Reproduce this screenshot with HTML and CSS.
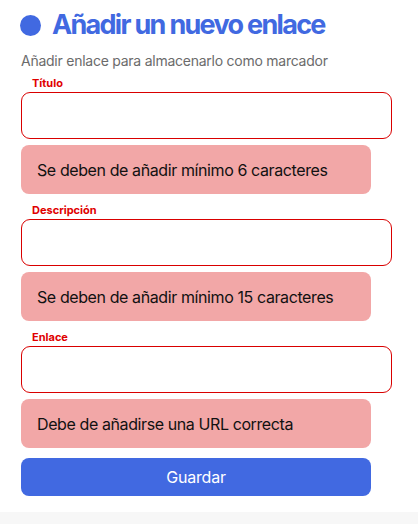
FILE: index.html
```html
<!DOCTYPE html>
<html lang="es">
<head>
<meta charset="utf-8">
<title>Añadir un nuevo enlace</title>
<link rel="stylesheet" href="styles.css">
</head>
<body>
<main class="page">
  <header class="header">
    <span class="dot"></span>
    <h1 class="title">Añadir un nuevo enlace</h1>
  </header>
  <p class="subtitle">Añadir enlace para almacenarlo como marcador</p>
  <form class="form">
    <div class="field">
      <label class="label" for="titulo">Título</label>
      <input class="input" id="titulo" type="text">
      <div class="error">Se deben de añadir mínimo 6 caracteres</div>
    </div>
    <div class="field">
      <label class="label" for="descripcion">Descripción</label>
      <input class="input" id="descripcion" type="text">
      <div class="error">Se deben de añadir mínimo 15 caracteres</div>
    </div>
    <div class="field">
      <label class="label" for="enlace">Enlace</label>
      <input class="input" id="enlace" type="text">
      <div class="error">Debe de añadirse una URL correcta</div>
    </div>
    <button class="button" type="button">Guardar</button>
  </form>
</main>
</body>
</html>
```
FILE: styles.css
```css
* { box-sizing: border-box; }
html, body { margin: 0; padding: 0; }
body {
  background: #f7f7f7;
  font-family: Inter, "Noto Sans", Arial, sans-serif;
  color: #111;
}
.page {
  background: #fff;
  min-height: 512px;
  padding: 10px 26px 0 21px;
}
.header {
  display: flex;
  align-items: center;
  gap: 11px;
}
.dot {
  width: 21px;
  height: 21px;
  border-radius: 50%;
  background: #4169e1;
  flex: none;
  margin-left: -1px;
}
.title {
  margin: 0;
  font-size: 27px;
  line-height: 30px;
  font-weight: 700;
  letter-spacing: -1.7px;
  color: #4169e1;
}
.subtitle {
  margin: 12px 0 0;
  font-size: 14px;
  line-height: 17px;
  letter-spacing: -0.25px;
  color: #6b6b6b;
}
.form {
  display: flex;
  flex-direction: column;
  margin-top: 8px;
}
.field {
  display: flex;
  flex-direction: column;
  margin-bottom: 10px;
}
.label {
  font-size: 11px;
  line-height: 13px;
  font-weight: 700;
  color: #e00000;
  padding-left: 11px;
  margin-bottom: 2px;
}
.input {
  height: 47px;
  width: 100%;
  border: 1px solid #d90000;
  border-radius: 9px;
  background: #fff;
  font: inherit;
  padding: 0 12px;
  outline: none;
}
.error {
  margin-top: 6px;
  width: 350px;
  height: 49px;
  padding: 0 16px;
  display: flex;
  align-items: center;
  background: #f2a7a7;
  border-radius: 8px;
  font-size: 16px;
  letter-spacing: -0.4px;
  color: #111;
}
.button {
  width: 350px;
  height: 38px;
  border: none;
  border-radius: 8px;
  background: #4169e1;
  color: #fff;
  font-family: inherit;
  font-size: 16px;
  letter-spacing: -0.2px;
  cursor: pointer;
}
```
